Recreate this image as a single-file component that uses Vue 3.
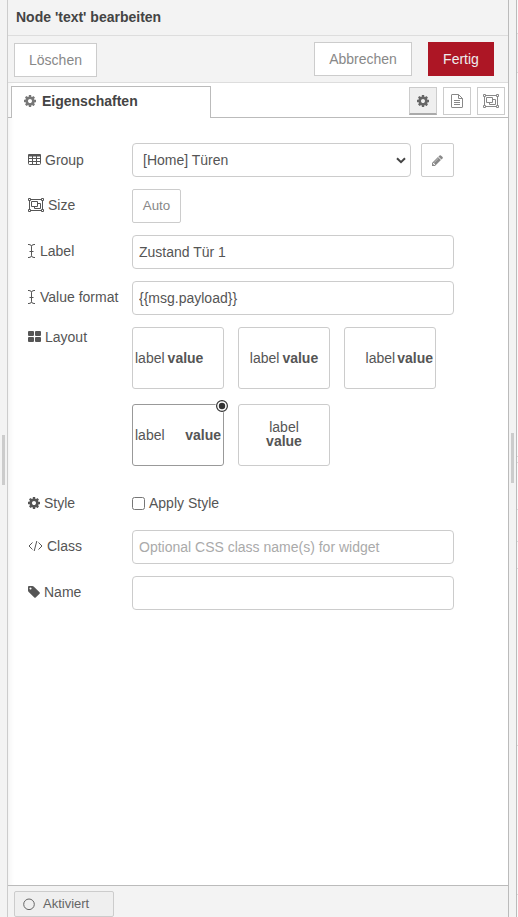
<script setup>
import { ref, h } from 'vue'

const label = ref('Zustand Tür 1')
const format = ref('{{msg.payload}}')
const cssClass = ref('')
const name = ref('')
const applyStyle = ref(false)
const group = ref('home')
const selected = ref('spread')
const layouts = ['left', 'center', 'right', 'spread', 'stack']

// heights of the neighbouring sidebar's sections, top to bottom
const sections = [34, 39, 384, 6, 47, 32, 27, 177, 149]

const cog = 'M1152 896q0-106-75-181t-181-75-181 75-75 181 75 181 181 75 181-75 75-181zm512-109v222q0 12-8 23t-20 13l-185 28q-19 54-39 91 35 50 107 138 10 12 10 25t-9 23q-27 37-99 108t-94 71q-12 0-26-9l-138-108q-44 23-91 38-16 136-29 186-7 28-36 28h-222q-14 0-24.5-8.5t-11.5-21.5l-28-184q-49-16-90-37l-141 107q-10 9-25 9-14 0-25-11-126-114-165-168-7-10-7-23 0-12 8-23 15-21 51-66.5t54-70.5q-27-50-41-99l-183-27q-13-2-21-12.5t-8-23.5v-222q0-12 8-23t19-13l186-28q14-46 39-92-40-57-107-138-10-12-10-24 0-10 9-23 26-36 98.5-107.5t94.5-71.5q13 0 26 10l138 107q44-23 91-38 16-136 29-186 7-28 36-28h222q14 0 24.5 8.5t11.5 21.5l28 184q49 16 90 37l142-107q9-9 24-9 13 0 25 10 129 119 165 170 7 8 7 22 0 12-8 23-15 21-51 66.5t-54 70.5q26 50 41 98l183 28q13 2 21 12.5t8 23.5z'
const pencil = 'M491 1536l91-91-235-235-91 91v107h128v128h107zm523-928q0-22-22-22-10 0-17 7l-542 542q-7 7-7 17 0 22 22 22 10 0 17-7l542-542q7-7 7-17zm-54-192l416 416-832 832h-416v-416zm683 96q0 53-37 90l-166 166-416-416 166-165q36-38 90-38 53 0 91 38l235 234q37 39 37 91z'
const tag = 'M576 448q0-53-37.5-90.5t-90.5-37.5-90.5 37.5-37.5 90.5 37.5 90.5 90.5 37.5 90.5-37.5 37.5-90.5zm1067 576q0 53-37 90l-491 492q-39 37-91 37-53 0-90-37l-715-716q-38-37-64.5-101t-26.5-117v-416q0-52 38-90t90-38h416q53 0 117 26.5t102 64.5l715 714q37 39 37 91z'

// fill: solid shape, line: stroked shape; w/h are rendered size in pixels
const icons = {
  cog: { w: 12, h: 14, box: '128 0 1536 1792', fill: cog },
  pencil: { w: 12, h: 14, box: '128 0 1536 1792', fill: pencil },
  tag: { w: 12, h: 14, box: '128 0 1536 1792', fill: tag },
  table: { w: 13, h: 14, box: '0 0 13 14', fill: 'M0 2Q0 1 1 1H12Q13 1 13 2V3.5H0Z', line: 'M.5 3V10.5Q.5 11.5 1.5 11.5H11.5Q12.5 11.5 12.5 10.5V3M.5 5.5H12.5M.5 8.5H12.5M4.5 3V11.5M8.5 3V11.5' },
  group: { w: 16, h: 14, box: '0 0 16 14', line: 'M.5 .5H2.5V2.5H.5ZM13.5 .5H15.5V2.5H13.5ZM.5 11.5H2.5V13.5H.5ZM13.5 11.5H15.5V13.5H13.5ZM2.5 1.5H13.5M2.5 12.5H13.5M1.5 2.5V11.5M14.5 2.5V11.5M3.5 3.5H9.5V8.5H3.5ZM9.5 5.5H12.5V10.5H6.5V8.5' },
  cursor: { w: 8, h: 14, box: '0 0 8 14', line: 'M0 .5H1Q3.5 .5 3.5 2.5V11.5Q3.5 13.5 1 13.5H0M7 .5H6Q3.5 .5 3.5 2.5M3.5 11.5Q3.5 13.5 6 13.5H7M1.5 7.5H5.5' },
  large: { w: 13, h: 14, box: '0 0 13 14', fill: 'M1 1H5Q6 1 6 2V5Q6 6 5 6H1Q0 6 0 5V2Q0 1 1 1ZM8 1H12Q13 1 13 2V5Q13 6 12 6H8Q7 6 7 5V2Q7 1 8 1ZM1 7H5Q6 7 6 8V11Q6 12 5 12H1Q0 12 0 11V8Q0 7 1 7ZM8 7H12Q13 7 13 8V11Q13 12 12 12H8Q7 12 7 11V8Q7 7 8 7Z' },
  code: { w: 15, h: 14, box: '0 0 15 14', line: 'M4.5 3.5L1 7L4.5 10.5M10.5 3.5L14 7L10.5 10.5M8.8 2L6.2 12' },
  file: { w: 12, h: 14, box: '0 0 12 14', line: 'M7.5 .5H1Q.5 .5 .5 1V13Q.5 13.5 1 13.5H11Q11.5 13.5 11.5 13V4.5L7.5 .5V4.5H11.5M3 6.5H9M3 8.5H9M3 10.5H9' },
  ring: { w: 12, h: 14, box: '0 0 12 14', line: 'M6 2A5.3 5.3 0 1 1 6 12.6A5.3 5.3 0 1 1 6 2Z' }
}

const Icon = (props) => {
  const i = icons[props.name]
  return h('svg', { width: i.w, height: i.h, viewBox: i.box, 'aria-hidden': 'true' }, [
    i.fill && h('path', { d: i.fill, fill: 'currentColor' }),
    i.line && h('path', { d: i.line, fill: 'none', stroke: 'currentColor', 'stroke-width': 1 })
  ])
}
Icon.props = ['name']
</script>

<template>
  <div class="shell">
    <div class="grip grip-left"><i></i></div>
    <main class="tray">
      <header class="title">Node 'text' bearbeiten</header>
      <div class="toolbar">
        <button class="btn delete">Löschen</button>
        <button class="btn cancel">Abbrechen</button>
        <button class="btn done">Fertig</button>
      </div>
      <nav class="tabs">
        <div class="tab"><Icon name="cog" /><span>Eigenschaften</span></div>
        <div class="tools">
          <button class="tool active"><Icon name="cog" /></button>
          <button class="tool"><Icon name="file" /></button>
          <button class="tool"><Icon name="group" /></button>
        </div>
      </nav>
      <form class="form" @submit.prevent>
        <div class="row">
          <label><Icon name="table" />Group</label>
          <div class="select">
            <select v-model="group"><option value="home">[Home] Türen</option></select>
            <svg width="10" height="7" viewBox="0 0 10 7"><path d="M1 1.2L5 5.2L9 1.2" fill="none" stroke="#444" stroke-width="2" /></svg>
          </div>
          <button class="edit"><Icon name="pencil" /></button>
        </div>
        <div class="row">
          <label class="up"><Icon name="group" />Size</label>
          <button class="auto">Auto</button>
        </div>
        <div class="row">
          <label class="up"><Icon name="cursor" />Label</label>
          <input v-model="label" type="text">
        </div>
        <div class="row">
          <label class="up"><Icon name="cursor" />Value format</label>
          <input v-model="format" type="text">
        </div>
        <div class="row layout-row">
          <label><Icon name="large" />Layout</label>
          <div class="layouts">
            <div v-for="l in layouts" :key="l" class="card" :class="[l, { selected: selected === l }]" @click="selected = l">
              <span>label</span><b>value</b>
              <svg v-if="selected === l" class="radio" width="14" height="14" viewBox="0 0 14 14"><circle cx="7" cy="7" r="6.5" fill="#fff" /><circle cx="7" cy="7" r="5.4" fill="#fff" stroke="#333" stroke-width="1.2" /><circle cx="7" cy="7" r="3.2" fill="#333" /></svg>
            </div>
          </div>
        </div>
        <div class="row style-row">
          <label><Icon name="cog" />Style</label>
          <input id="apply" v-model="applyStyle" type="checkbox"><label for="apply" class="apply">Apply Style</label>
        </div>
        <div class="row">
          <label class="up"><Icon name="code" />Class</label>
          <input v-model="cssClass" type="text" placeholder="Optional CSS class name(s) for widget">
        </div>
        <div class="row">
          <label class="up"><Icon name="tag" />Name</label>
          <input v-model="name" type="text">
        </div>
      </form>
      <footer class="footer">
        <button class="enabled"><Icon name="ring" /><span>Aktiviert</span></button>
      </footer>
    </main>
    <div class="grip grip-right"><i></i></div>
    <aside class="sidebar"><div v-for="(s, i) in sections" :key="i" :style="{ height: s + 'px' }"></div></aside>
  </div>
</template>

<style>
body { overflow: hidden; }
</style>

<style scoped>
.shell, .shell * { box-sizing: border-box; }
.shell { display: flex; width: 518px; height: 917px; overflow: hidden; background: #fff; color: #555; font: 14px/20px "Liberation Sans", Arial, sans-serif; }
.shell svg { flex: none; display: block; }
button, input, select { font: inherit; color: inherit; margin: 0; padding: 0; background: #fff; border: 1px solid #ccc; outline: 0; }
button { display: flex; align-items: center; justify-content: center; color: #888; }
.grip { width: 8px; background: #f3f3f3; border-right: 1px solid #bbb; }
.grip i { display: block; width: 3px; height: 50px; background: #ccc; }
.grip-left { border-right-color: #ccc; padding: 435px 0 0 2px; }
.grip-right { padding: 433px 0 0 2px; }
.sidebar { width: 1px; background: #fafafa; }
.sidebar div { border-bottom: 1px solid #ddd; }
.sidebar div:nth-child(2) { background: #f3f3f3; }
.tray { display: flex; flex-direction: column; width: 501px; border-right: 1px solid #bbb; box-shadow: inset 4px 0 6px -3px #eee; }
.title { height: 36px; padding: 7px 8px; background: #f3f3f3; border-bottom: 1px solid #ddd; color: #444; font-weight: bold; }
.toolbar { display: flex; align-items: flex-start; height: 47px; padding: 6px 14px 0 6px; background: #f3f3f3; border-bottom: 1px solid #ddd; }
.btn { height: 34px; }
.delete { width: 83px; margin-top: 1px; }
.cancel { width: 98px; margin-left: auto; }
.done { width: 66px; margin-left: 16px; background: #ad1625; border-color: #ad1625; color: #eee; }
.tabs { display: flex; justify-content: space-between; height: 35px; padding: 3px 3px 0; border-bottom: 1px solid #bbb; }
.tab { display: flex; align-items: center; gap: 6px; width: 200px; height: 32px; padding: 0 12px 3px; background: #fff; border: 1px solid #bbb; border-bottom: 0; color: #444; font-weight: bold; }
.tab svg { color: #777; }
.tools { display: flex; gap: 6px; padding-top: 1px; }
.tool { width: 28px; height: 28px; }
.active { background: #efefef; border-bottom: 2px solid #aaa; color: #666; }
.form { display: flex; flex-direction: column; gap: 12px; flex: 1; padding: 25px 20px 0; }
.row { display: flex; align-items: center; height: 34px; }
.row > label { display: flex; align-items: center; gap: 4px; width: 104px; white-space: nowrap; }
.row > label.up { padding-bottom: 2px; }
.row > .apply { width: auto; margin-left: 4px; }
.row input[type="text"] { width: 322px; height: 34px; padding: 0 6px; border-radius: 4px; }
input::placeholder { color: #aaa; opacity: 1; }
.select { display: flex; align-items: center; width: 279px; height: 34px; padding: 0 4px 0 10px; border: 1px solid #ccc; border-radius: 4px; }
select { flex: 1; height: 30px; appearance: none; border: 0; }
.edit { width: 33px; height: 34px; margin-left: 10px; border-radius: 2px; }
.edit svg { width: 11px; height: 13px; }
.auto { width: 49px; height: 34px; border-radius: 2px; font-size: 13.33px; }
.row.layout-row { align-items: flex-start; height: 139px; }
.layouts { display: grid; grid-template-columns: repeat(3, 92px); gap: 15px 14px; }
.card { position: relative; display: flex; align-items: center; gap: 3px; width: 92px; height: 62px; padding: 0 2px; border: 1px solid #ccc; border-radius: 3px; line-height: 14px; }
.center { justify-content: center; }
.right { justify-content: flex-end; gap: 2px; }
.spread { justify-content: space-between; }
.stack { flex-direction: column; justify-content: center; gap: 0; padding-bottom: 2px; }
.selected { border-color: #999; }
.radio { position: absolute; right: -6px; top: -6px; }
.row.style-row { height: 20px; margin: 15px 0 5px; }
.style-row input { width: 13px; height: 13px; }
.footer { height: 32px; padding: 5px 6px 0; background: #f3f3f3; border-top: 1px solid #bbb; }
.enabled { justify-content: flex-start; gap: 8px; width: 100px; height: 26px; padding: 0 8px; background: #efefef; border-radius: 2px; color: #666; font-size: 13px; }
</style>
